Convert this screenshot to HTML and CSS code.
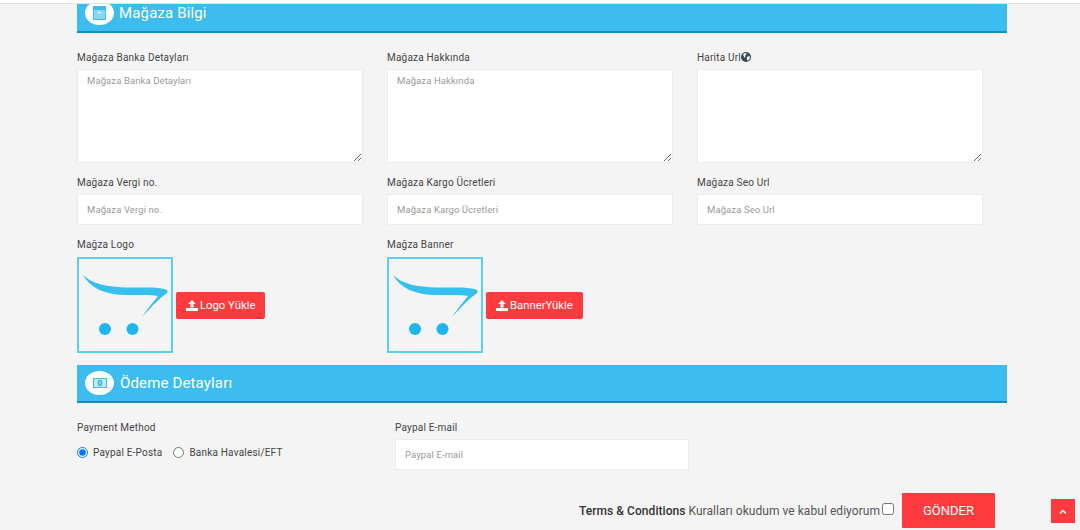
FILE: index.html
```html
<!DOCTYPE html>
<html lang="en">
<head>
    <meta charset="UTF-8">
    <meta name="viewport" content="width=device-width, initial-scale=1.0">
    <title>Mağaza Bilgi</title>
    <link rel="stylesheet" href="styles.css">
</head>
<body>
    <div class="top-strip"></div>
    <div class="page">
        <div class="section-bar">
            <span class="bar-icon">
                <svg width="13" height="14" viewBox="0 0 13 14"><rect x="0.500" y="0.500" width="12" height="13" fill="#8ad6f5" stroke="#3dbcf0"/><rect y="0" width="13" height="4" fill="#3dbcf0"/><rect x="5" y="6" width="3" height="1.200" fill="#fff"/></svg>
            </span>
            <h2>Mağaza Bilgi</h2>
        </div>

        <div class="form-grid">
            <div class="field">
                <label>Mağaza Banka Detayları</label>
                <textarea placeholder="Mağaza Banka Detayları"></textarea>
            </div>
            <div class="field">
                <label>Mağaza Hakkında</label>
                <textarea placeholder="Mağaza Hakkında"></textarea>
            </div>
            <div class="field">
                <label>Harita Url<svg class="globe" width="10" height="10" viewBox="0 0 10 10"><circle cx="5" cy="5" r="5" fill="#3c4a5c"/><path fill="#fff" d="M2 2.500l2-1.500 1.500.5-.5 1.500-1 .5.500 1.500-1 .5zM6 5l2.500-1 .5 2-2 2.500-1-.5z"/></svg></label>
                <textarea></textarea>
            </div>
            <div class="field">
                <label>Mağaza Vergi no.</label>
                <input type="text" placeholder="Mağaza Vergi no.">
            </div>
            <div class="field">
                <label>Mağaza Kargo Ücretleri</label>
                <input type="text" placeholder="Mağaza Kargo Ücretleri">
            </div>
            <div class="field">
                <label>Mağaza Seo Url</label>
                <input type="text" placeholder="Mağaza Seo Url">
            </div>
            <div class="field">
                <label>Mağza Logo</label>
                <div class="upload">
                    <div class="thumb">
                        <svg width="92" height="92" viewBox="0 0 92 92">
                            <path fill="#35c0ef" d="M4 16C13 25 28 28 48 28.500 62 29 76 27 87 30.500 89 31.500 89 33 87.500 34.500 81 39 76 44 63 58 69 49 75 42 79 37 72 35.500 62 36 48 36 26 36 11 29 4 16z"/>
                            <circle cx="26" cy="70" r="6" fill="#1fb6f0"/>
                            <circle cx="53.500" cy="70" r="6" fill="#1fb6f0"/>
                        </svg>
                    </div>
                    <button class="btn-upload" type="button">
                        <svg width="12" height="11" viewBox="0 0 12 11"><path fill="#fff" d="M6 0l3.800 4H7.500v3.500h-3V4H2.200zM0 8h12v3H0z"/></svg>
                        Logo Yükle
                    </button>
                </div>
            </div>
            <div class="field">
                <label>Mağza Banner</label>
                <div class="upload">
                    <div class="thumb">
                        <svg width="92" height="92" viewBox="0 0 92 92">
                            <path fill="#35c0ef" d="M4 16C13 25 28 28 48 28.500 62 29 76 27 87 30.500 89 31.500 89 33 87.500 34.500 81 39 76 44 63 58 69 49 75 42 79 37 72 35.500 62 36 48 36 26 36 11 29 4 16z"/>
                            <circle cx="26" cy="70" r="6" fill="#1fb6f0"/>
                            <circle cx="53.500" cy="70" r="6" fill="#1fb6f0"/>
                        </svg>
                    </div>
                    <button class="btn-upload" type="button">
                        <svg width="12" height="11" viewBox="0 0 12 11"><path fill="#fff" d="M6 0l3.800 4H7.500v3.500h-3V4H2.200zM0 8h12v3H0z"/></svg>
                        BannerYükle
                    </button>
                </div>
            </div>
        </div>

        <div class="section-bar">
            <span class="bar-icon">
                <svg width="14" height="10" viewBox="0 0 14 10"><rect x="0.500" y="0.500" width="13" height="9" fill="#c4ebfb" stroke="#3dbcf0"/><ellipse cx="7" cy="5" rx="2.500" ry="3.200" fill="#3dbcf0"/><rect x="6.500" y="3.500" width="1" height="3" fill="#c4ebfb"/></svg>
            </span>
            <h2>Ödeme Detayları</h2>
        </div>

        <div class="payment">
            <div class="method">
                <label>Payment Method</label>
                <div class="radios">
                    <label class="radio"><input type="radio" name="pay" checked> Paypal E-Posta</label>
                    <label class="radio"><input type="radio" name="pay"> Banka Havalesi/EFT</label>
                </div>
            </div>
            <div class="field paypal">
                <label>Paypal E-mail</label>
                <input type="text" placeholder="Paypal E-mail">
            </div>
        </div>

        <div class="submit-row">
            <span class="terms"><strong>Terms &amp; Conditions</strong> Kuralları okudum ve kabul ediyorum</span>
            <input type="checkbox" class="terms-check">
            <button class="btn-send" type="button">GÖNDER</button>
        </div>
    </div>

    <a class="to-top" href="#">
        <svg width="8" height="5" viewBox="0 0 8 5"><path fill="none" stroke="#fff" stroke-width="1.500" d="M1 4.500l3-3 3 3"/></svg>
    </a>
</body>
</html>
```

FILE: styles.css
```css
* {
    box-sizing: border-box;
}
html, body {
    height: 530px;
    overflow: hidden;
}
body {
    margin: 0;
    background-color: #f4f4f4;
    font-family: Roboto, "Liberation Sans", sans-serif;
    font-size: 10px;
    color: #444;
}
.top-strip {
    position: relative;
    z-index: 1;
    height: 4px;
    background-color: #fff;
    border-bottom: 1px solid #e2e2e2;
}
.page {
    width: 930px;
    margin-top: -9px;
    margin-left: 77px;
}
.section-bar {
    display: flex;
    align-items: center;
    height: 38px;
    padding-left: 8px;
    background-color: #3dbcf0;
    border-bottom: 2px solid #1b8dbc;
}
.section-bar h2 {
    margin: 0 0 0 6px;
    font-size: 15px;
    font-weight: 400;
    letter-spacing: 0.15px;
    color: #fff;
}
.section-bar:first-child h2 {
    margin-left: 5px;
}
.bar-icon {
    display: flex;
    align-items: center;
    justify-content: center;
    width: 29px;
    height: 24px;
    border-radius: 50%;
    background-color: #fff;
}
.form-grid {
    display: grid;
    grid-template-columns: repeat(3, 286px);
    column-gap: 24px;
    margin-top: 19px;
}
.field label, .method > label {
    display: block;
    height: 12px;
    margin-bottom: 5px;
    font-size: 10px;
    line-height: 12px;
    letter-spacing: 0.2px;
    color: #444;
}
.globe {
    vertical-align: -1px;
}
textarea, input[type="text"] {
    display: block;
    width: 100%;
    border: 1px solid #ececec;
    background-color: #fff;
    font-family: inherit;
    font-size: 9.500px;
    letter-spacing: 0.1px;
    color: #444;
    outline: none;
}
textarea::placeholder, input::placeholder {
    color: #9a9a9a;
    opacity: 1;
}
textarea {
    height: 94px;
    margin-bottom: 14px;
    padding: 5px 9px;
}
input[type="text"] {
    height: 31px;
    padding: 0 9px;
}
.field input[type="text"] {
    margin-bottom: 14px;
}
.upload {
    display: flex;
    align-items: center;
    gap: 3px;
    margin-top: 6px;
}
.thumb {
    width: 96px;
    height: 96px;
    border: 2px solid #5ccdf5;
}
.thumb svg {
    display: block;
}
.btn-upload {
    display: flex;
    align-items: center;
    gap: 2px;
    height: 27px;
    padding: 0 10px;
    border: none;
    border-radius: 2px;
    background-color: #ff3b3f;
    color: #fff;
    font-family: inherit;
    font-size: 11.300px;
    cursor: pointer;
}
.form-grid + .section-bar {
    margin-top: 12px;
}
.payment {
    display: flex;
    margin-top: 19px;
}
.method {
    width: 318px;
}
.method > label {
    margin-bottom: 13px;
}
.radios {
    display: flex;
    gap: 11px;
}
.radio {
    display: flex;
    align-items: center;
    font-size: 10px;
    letter-spacing: 0.2px;
    color: #444;
}
.radio input {
    width: 11px;
    height: 11px;
    margin: 0 5px 0 0;
}
.paypal {
    width: 294px;
}
.paypal input[type="text"] {
    margin-bottom: 0;
}
.submit-row {
    display: flex;
    align-items: center;
    justify-content: flex-end;
    margin-top: 23px;
    margin-right: 12px;
    font-size: 12px;
    color: #555;
}
.terms {
    letter-spacing: 0.05px;
}
.terms strong {
    font-weight: 500;
    color: #333;
}
.terms-check {
    width: 12px;
    height: 12px;
    margin: 0 8px 3px 2px;
}
.btn-send {
    width: 93px;
    height: 35px;
    border: none;
    border-radius: 1px;
    background-color: #ff3b3f;
    color: #fff;
    font-family: inherit;
    font-size: 13px;
    cursor: pointer;
}
.to-top {
    position: fixed;
    left: 1051px;
    top: 499px;
    display: flex;
    align-items: center;
    justify-content: center;
    width: 24px;
    height: 24px;
    background-color: #ff3b3f;
}
```
